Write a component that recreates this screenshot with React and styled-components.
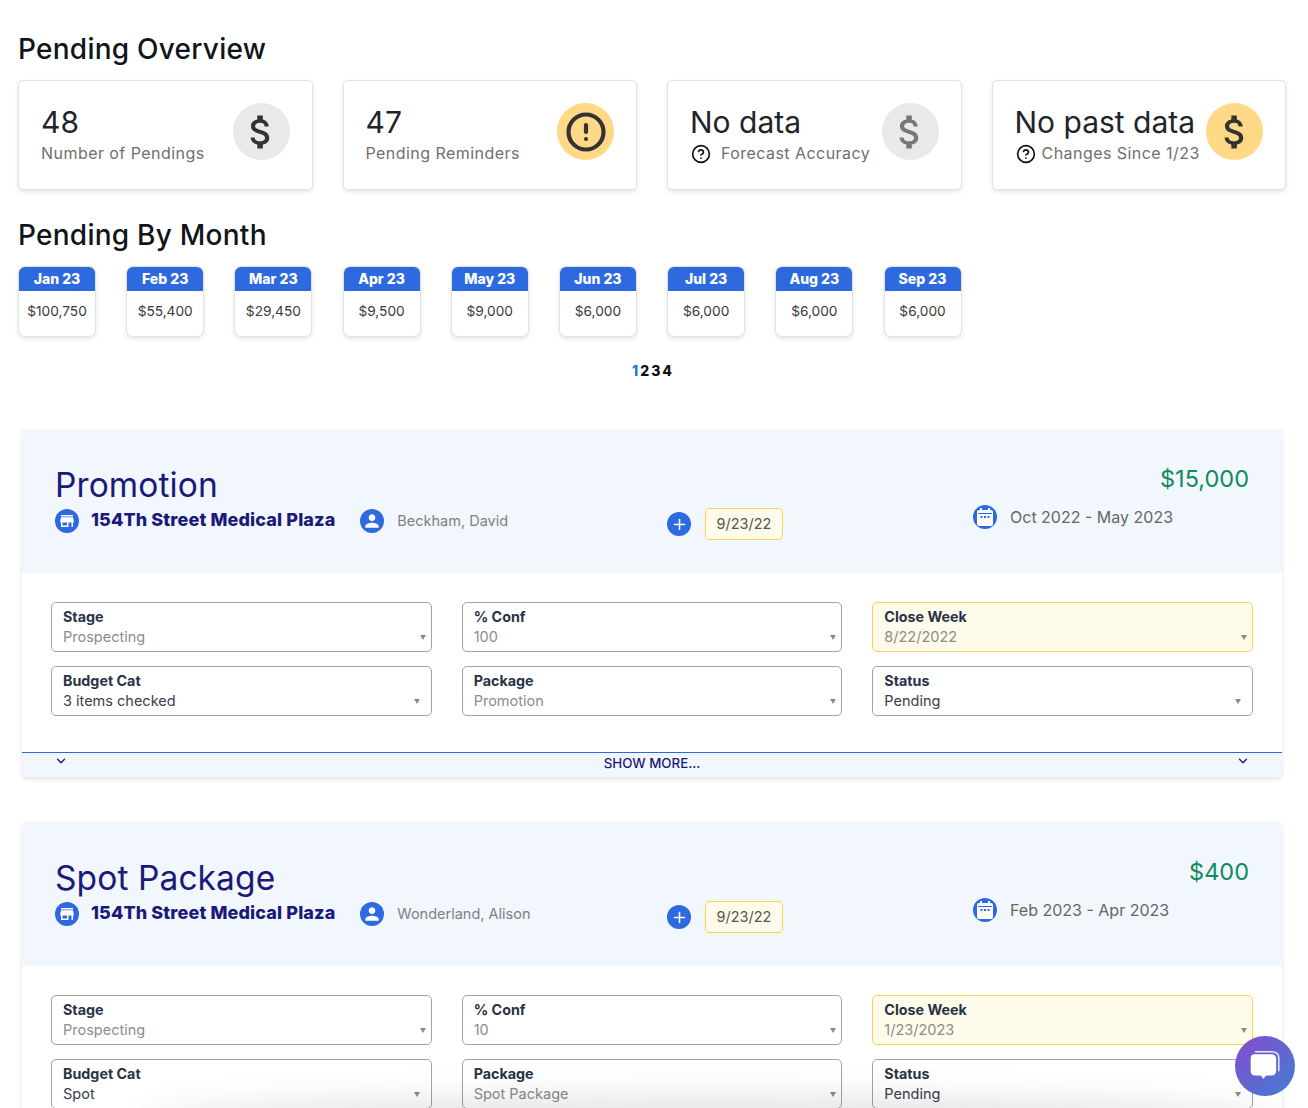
import React from "react";
import styled, { createGlobalStyle } from "styled-components";
import { AlertCircle, HelpCircle, ChevronDown, Plus } from "lucide-react";
import { MdAttachMoney, MdStore, MdPerson } from "react-icons/md";

const GlobalStyle = createGlobalStyle`
	html, body {
		margin: 0;
		padding: 0;
		background: #fff;
		height: 1108px;
		overflow: hidden;
	}
	* {
		box-sizing: border-box;
	}
	body {
		font-family: Inter, "Liberation Sans", sans-serif;
	}
`;

const overview = [
	{ value: "48", label: "Number of Pendings", tone: "grey", icon: "dollar" },
	{ value: "47", label: "Pending Reminders", tone: "yellow", icon: "alert" },
	{ value: "No data", label: "Forecast Accuracy", tone: "grey", icon: "dollarMuted", help: true, gap: 10 },
	{ value: "No past data", label: "Changes Since 1/23", tone: "yellow", icon: "dollar", help: true, gap: 6 },
];

const months = [
	["Jan 23", "$100,750"],
	["Feb 23", "$55,400"],
	["Mar 23", "$29,450"],
	["Apr 23", "$9,500"],
	["May 23", "$9,000"],
	["Jun 23", "$6,000"],
	["Jul 23", "$6,000"],
	["Aug 23", "$6,000"],
	["Sep 23", "$6,000"],
];

const deals = [
	{
		title: "Promotion",
		amount: "$15,000",
		owner: "Beckham, David",
		range: "Oct 2022 - May 2023",
		conf: "100",
		close: "8/22/2022",
		budget: "3 items checked",
		pack: "Promotion",
	},
	{
		title: "Spot Package",
		amount: "$400",
		owner: "Wonderland, Alison",
		range: "Feb 2023 - Apr 2023",
		conf: "10",
		close: "1/23/2023",
		budget: "Spot",
		pack: "Spot Package",
	},
];

const CalendarGlyph = () => (
	<svg width="16" height="18" viewBox="0 0 16 18" fill="none">
		<rect x="3" y="0" width="2" height="3" fill="#fff" />
		<rect x="11" y="0" width="2" height="3" fill="#fff" />
		<path d="M2 2h12a2 2 0 0 1 2 2v12a2 2 0 0 1-2 2H2a2 2 0 0 1-2-2V4a2 2 0 0 1 2-2z" fill="#fff" />
		<rect x="1" y="5" width="14" height="1" fill="#2d6ae0" />
		<rect x="3.500" y="8" width="2" height="2" fill="#2d6ae0" />
		<rect x="7" y="8" width="2" height="2" fill="#2d6ae0" />
		<rect x="10.500" y="8" width="2" height="2" fill="#2d6ae0" />
	</svg>
);

const ChatGlyph = () => (
	<svg width="34" height="34" viewBox="0 0 32 32" fill="none">
		<path d="M7 2.500h15c4 0 7 1.500 7 6v12" stroke="#fff" strokeWidth="1.400" strokeLinecap="round" opacity="0.85" />
		<path
			d="M6 5h16c3 0 4.500 1.500 4.500 4.500v11c0 3-1.500 4.500-4.500 4.500h-5l-2.500 3-2.500-3H7c-3 0-4.500-1.500-4.500-4.500v-11C2.500 6.500 3.500 5 6 5z"
			fill="#fff"
		/>
	</svg>
);

const OverviewIcon = ({ icon }) => {
	if (icon === "alert") return <AlertCircle size={42} color="#333" strokeWidth={2.4} />;
	return <MdAttachMoney size={44} color={icon === "dollarMuted" ? "#777" : "#333"} />;
};

const Field = ({ label, value, muted, highlight, wideArrow }) => (
	<FieldBox $highlight={highlight}>
		<FieldLabel>{label}</FieldLabel>
		<FieldValue $muted={muted}>{value}</FieldValue>
		<FieldArrow $wide={wideArrow} />
	</FieldBox>
);

const Deal = ({ deal }) => (
	<Panel>
		<PanelHeader>
			<PanelLeft>
				<DealTitle>{deal.title}</DealTitle>
				<DealMeta>
					<RoundIcon>
						<MdStore size={18} color="#fff" />
					</RoundIcon>
					<Plaza>154Th Street Medical Plaza</Plaza>
					<RoundIcon>
						<MdPerson size={20} color="#fff" />
					</RoundIcon>
					<Owner>{deal.owner}</Owner>
				</DealMeta>
			</PanelLeft>
			<PanelMiddle>
				<AddButton>
					<Plus size={17} color="#fff" strokeWidth={2.2} />
				</AddButton>
				<DateChip>9/23/22</DateChip>
			</PanelMiddle>
			<PanelRight>
				<Amount>{deal.amount}</Amount>
				<RangeRow>
					<RoundIcon>
						<CalendarGlyph />
					</RoundIcon>
					<RangeText>{deal.range}</RangeText>
				</RangeRow>
			</PanelRight>
		</PanelHeader>
		<FieldGrid>
			<Field label="Stage" value="Prospecting" muted />
			<Field label="% Conf" value={deal.conf} muted />
			<Field label="Close Week" value={deal.close} muted highlight />
			<Field label="Budget Cat" value={deal.budget} wideArrow />
			<Field label="Package" value={deal.pack} muted />
			<Field label="Status" value="Pending" wideArrow />
		</FieldGrid>
		<PanelFooter>
			<ChevronDown size={14} color="#1a1a7a" strokeWidth={2.4} />
			<ShowMore>SHOW MORE...</ShowMore>
			<ChevronDown size={14} color="#1a1a7a" strokeWidth={2.4} />
		</PanelFooter>
	</Panel>
);

const App = () => (
	<Page>
		<GlobalStyle />
		<SectionTitle>Pending Overview</SectionTitle>
		<OverviewRow>
			{overview.map((item) => (
				<OverviewCard key={item.label}>
					<OverviewText>
						<OverviewValue>{item.value}</OverviewValue>
						<OverviewLabel $gap={item.gap}>
							{item.help && <HelpIcon size={20} color="#111" strokeWidth={2} />}
							{item.label}
						</OverviewLabel>
					</OverviewText>
					<IconDisc $tone={item.tone}>
						<OverviewIcon icon={item.icon} />
					</IconDisc>
				</OverviewCard>
			))}
		</OverviewRow>
		<MonthTitle>Pending By Month</MonthTitle>
		<MonthRow>
			{months.map(([month, total]) => (
				<MonthCard key={month}>
					<MonthHead>{month}</MonthHead>
					<MonthBody>{total}</MonthBody>
				</MonthCard>
			))}
		</MonthRow>
		<Pager>
			<PageNumber $active>1</PageNumber>
			<PageNumber>2</PageNumber>
			<PageNumber>3</PageNumber>
			<PageNumber>4</PageNumber>
		</Pager>
		<PanelList>
			{deals.map((deal) => (
				<Deal key={deal.title} deal={deal} />
			))}
		</PanelList>
		<BottomShade />
		<ChatButton>
			<ChatGlyph />
		</ChatButton>
	</Page>
);

export default App;

const Page = styled.div`
	height: 1108px;
	overflow: hidden;
	padding: 32px 22px 0 18px;
	color: #212529;
`;

const SectionTitle = styled.h2`
	margin: 0;
	font-size: 28px;
	line-height: 34px;
	font-weight: 500;
	color: #10151b;
	letter-spacing: 0.25px;
`;

const MonthTitle = styled(SectionTitle)`
	margin-top: 28px;
`;

const OverviewRow = styled.div`
	display: grid;
	grid-template-columns: repeat(4, 1fr);
	gap: 30px;
	margin-top: 14px;
`;

const OverviewCard = styled.div`
	height: 110px;
	display: flex;
	align-items: center;
	justify-content: space-between;
	padding: 0 22px 7px 22px;
	background: #fff;
	border: 1px solid #e2e2e2;
	border-radius: 5px;
	box-shadow: 0 2px 4px rgba(0, 0, 0, 0.1);
`;

const OverviewText = styled.div`
	display: flex;
	flex-direction: column;
	gap: 2px;
	margin-top: 4px;
	min-width: 0;
`;

const OverviewValue = styled.div`
	font-size: 30px;
	line-height: 36px;
	color: #212529;
	white-space: nowrap;
`;

const OverviewLabel = styled.div`
	display: flex;
	align-items: center;
	gap: ${(p) => p.$gap || 0}px;
	font-size: 16px;
	line-height: 22px;
	letter-spacing: 0.45px;
	color: #6f6f6f;
	white-space: nowrap;
`;

const HelpIcon = styled(HelpCircle)`
	margin-left: 1px;
	margin-top: 2px;
`;

const IconDisc = styled.div`
	flex: none;
	width: 57px;
	height: 57px;
	display: flex;
	align-items: center;
	justify-content: center;
	border-radius: 50%;
	background: ${(p) => (p.$tone === "yellow" ? "#ffd985" : "#e9e9e9")};
`;

const MonthRow = styled.div`
	display: flex;
	gap: 30.200px;
	margin-top: 14px;
`;

const MonthCard = styled.div`
	width: 78px;
	height: 71px;
	background: #fff;
	border: 1px solid #e2e2e2;
	border-radius: 7px;
	overflow: hidden;
	box-shadow: 0 2px 4px rgba(0, 0, 0, 0.1);
`;

const MonthHead = styled.div`
	height: 24px;
	background: #2d6ae0;
	color: #fff;
	font-size: 14px;
	font-weight: 800;
	line-height: 24px;
	text-align: center;
`;

const MonthBody = styled.div`
	padding-top: 10px;
	font-size: 13.700px;
	line-height: 20px;
	color: #3a3a3a;
	text-align: center;
`;

const Pager = styled.div`
	display: flex;
	justify-content: center;
	gap: 2px;
	margin-top: 26px;
`;

const PageNumber = styled.span`
	font-size: 14px;
	line-height: 16px;
	font-weight: 800;
	color: ${(p) => (p.$active ? "#1677e6" : "#111")};
`;

const PanelList = styled.div`
	display: flex;
	flex-direction: column;
	gap: 45px;
	margin: 50px 4px 0 4px;
`;

const Panel = styled.section`
	flex: none;
	height: 348px;
	background: #fff;
	border-radius: 4px;
	overflow: hidden;
	box-shadow: 0 2px 4px rgba(0, 0, 0, 0.12);
`;

const PanelHeader = styled.div`
	height: 144px;
	display: grid;
	grid-template-columns: 612px 306px 1fr;
	padding: 0 33px;
	background: #f2f6fd;
`;

const PanelLeft = styled.div`
	padding-top: 36px;
`;

const DealTitle = styled.div`
	font-size: 33.500px;
	line-height: 40px;
	letter-spacing: 0.1px;
	color: #1a1a7a;
`;

const DealMeta = styled.div`
	display: flex;
	align-items: center;
	margin-top: 4px;
`;

const RoundIcon = styled.span`
	flex: none;
	width: 24px;
	height: 24px;
	display: flex;
	align-items: center;
	justify-content: center;
	border-radius: 50%;
	background: #2d6ae0;
`;

const Plaza = styled.span`
	margin: -2px 25px 0 12px;
	font-size: 18px;
	line-height: 24px;
	font-weight: 800;
	letter-spacing: 0.12px;
	color: #1a1a7a;
	white-space: nowrap;
`;

const Owner = styled.span`
	margin-left: 13px;
	font-size: 14.500px;
	line-height: 24px;
	color: #808080;
	white-space: nowrap;
`;

const PanelMiddle = styled.div`
	display: flex;
	align-items: flex-start;
	gap: 14px;
	padding-top: 79px;
`;

const AddButton = styled.span`
	flex: none;
	width: 24px;
	height: 24px;
	margin-top: 4px;
	display: flex;
	align-items: center;
	justify-content: center;
	border-radius: 50%;
	background: #2d6ae0;
`;

const DateChip = styled.span`
	width: 78px;
	height: 32px;
	padding-bottom: 2px;
	display: flex;
	align-items: center;
	justify-content: center;
	background: #fffbeb;
	border: 1px solid #ffd24d;
	border-radius: 5px;
	font-size: 14.500px;
	color: #555;
`;

const PanelRight = styled.div`
	display: flex;
	flex-direction: column;
	padding-top: 35px;
`;

const Amount = styled.div`
	font-size: 23.500px;
	line-height: 30px;
	color: #118a5f;
	text-align: right;
`;

const RangeRow = styled.div`
	display: flex;
	align-items: center;
	gap: 13px;
	margin-top: 11px;
`;

const RangeText = styled.span`
	font-size: 16px;
	line-height: 24px;
	color: #666;
	white-space: nowrap;
`;

const FieldGrid = styled.div`
	display: grid;
	grid-template-columns: repeat(3, 1fr);
	align-content: start;
	column-gap: 30px;
	row-gap: 14px;
	padding: 29px 29px 0 29px;
	height: 179px;
`;

const FieldBox = styled.div`
	position: relative;
	height: 50px;
	padding: 5px 11px 0 11px;
	background: ${(p) => (p.$highlight ? "#fefbea" : "#fff")};
	border: 1px solid ${(p) => (p.$highlight ? "#ffd24d" : "#a3a3a3")};
	border-radius: 5px;
`;

const FieldLabel = styled.div`
	font-size: 14.300px;
	line-height: 18px;
	font-weight: 700;
	color: #283347;
`;

const FieldValue = styled.div`
	margin-top: 1px;
	font-size: 14.500px;
	line-height: 20px;
	color: ${(p) => (p.$muted ? "#8c8c8c" : "#39404d")};
`;

const FieldArrow = styled.span`
	position: absolute;
	right: ${(p) => (p.$wide ? 11 : 5)}px;
	top: 32px;
	width: 0;
	height: 0;
	border-left: 3.500px solid transparent;
	border-right: 3.500px solid transparent;
	border-top: 5px solid #8a8a8a;
`;

const PanelFooter = styled.div`
	height: 25px;
	display: flex;
	align-items: flex-start;
	justify-content: space-between;
	padding: 1px 32px 0 32px;
	background: #f2f6fd;
	border-top: 1px solid #2d6ae0;
`;

const ShowMore = styled.span`
	font-size: 13.300px;
	line-height: 18px;
	font-weight: 500;
	color: #1a1a7a;
`;

const BottomShade = styled.div`
	position: fixed;
	left: 150px;
	right: 30px;
	bottom: -30px;
	height: 30px;
	box-shadow: 0 0 36px 8px rgba(0, 0, 0, 0.13);
	border-radius: 50%;
`;

const ChatButton = styled.div`
	position: fixed;
	left: 1235px;
	top: 1036px;
	width: 60px;
	height: 60px;
	display: flex;
	align-items: center;
	justify-content: center;
	border-radius: 50%;
	background: linear-gradient(135deg, #7a55d0 20%, #3f7fd0 100%);
`;
